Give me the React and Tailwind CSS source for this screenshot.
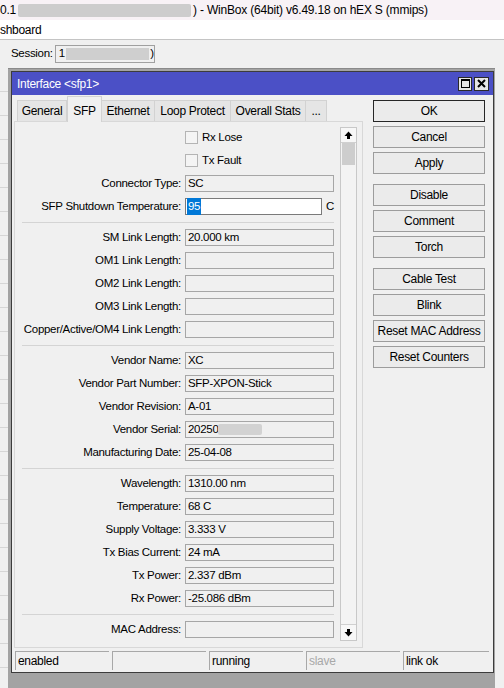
import React from 'react';

// WinBox "Interface <sfp1>" window, SFP tab

const sections = [
  [
    { type: 'check', label: 'Rx Lose' },
    { type: 'check', label: 'Tx Fault' },
    { label: 'Connector Type:', value: 'SC' },
    { type: 'edit', label: 'SFP Shutdown Temperature:', value: '95' },
  ],
  [
    { label: 'SM Link Length:', value: '20.000 km' },
    { label: 'OM1 Link Length:', value: '' },
    { label: 'OM2 Link Length:', value: '' },
    { label: 'OM3 Link Length:', value: '' },
    { label: 'Copper/Active/OM4 Link Length:', value: '' },
  ],
  [
    { label: 'Vendor Name:', value: 'XC' },
    { label: 'Vendor Part Number:', value: 'SFP-XPON-Stick' },
    { label: 'Vendor Revision:', value: 'A-01' },
    { label: 'Vendor Serial:', value: '20250', blur: true },
    { label: 'Manufacturing Date:', value: '25-04-08' },
  ],
  [
    { label: 'Wavelength:', value: '1310.00 nm' },
    { label: 'Temperature:', value: '68 C' },
    { label: 'Supply Voltage:', value: '3.333 V' },
    { label: 'Tx Bias Current:', value: '24 mA' },
    { label: 'Tx Power:', value: '2.337 dBm' },
    { label: 'Rx Power:', value: '-25.086 dBm' },
  ],
  [{ label: 'MAC Address:', value: '' }],
];

const buttonGroups = [
  ['OK', 'Cancel', 'Apply'],
  ['Disable', 'Comment', 'Torch'],
  ['Cable Test', 'Blink', 'Reset MAC Address', 'Reset Counters'],
];

const tabs = ['General', 'SFP', 'Ethernet', 'Loop Protect', 'Overall Stats', '...'];
const tabWidths = ['w-[50px]', 'w-[35px]', 'w-[53px]', 'w-[76px]', 'w-[75px]', 'w-[21px]'];

const status = [
  { text: 'enabled' },
  { text: '' },
  { text: 'running' },
  { text: 'slave', dim: true },
  { text: 'link ok' },
];

function Arrow({ down }) {
  return (
    <svg width="9" height="9" viewBox="0 0 9 9" className={down ? 'rotate-180' : ''}>
      <polygon points="4.5,0.5 8.5,5 0.5,5" fill="#000" />
      <rect x="3" y="5" width="3" height="3" fill="#000" />
    </svg>
  );
}

function Row({ item }) {
  if (item.type === 'check') {
    return (
      <div className="flex h-[23px] items-center">
        <div className="ml-[170px] h-[13px] w-[13px] border border-[#b4b4b4] bg-[#f4f4f4]" />
        <span className="ml-[4px]">{item.label}</span>
      </div>
    );
  }
  if (item.type === 'edit') {
    return (
      <div className="flex h-[23px] items-center">
        <div className="w-[166px] whitespace-nowrap text-right">{item.label}</div>
        <div className="ml-[4px] flex h-[17px] w-[137px] items-center border border-[#7a7a7a] bg-white pl-[1px]">
          <span className="bg-[#0078d7] px-[1px] text-white">{item.value}</span>
        </div>
        <span className="ml-[4px]">C</span>
      </div>
    );
  }
  return (
    <div className="flex h-[23px] items-center">
      <div className="w-[166px] whitespace-nowrap text-right">{item.label}</div>
      <div className="ml-[4px] flex h-[17px] w-[149px] items-center border border-[#a6a6a6] bg-[#f0f0f0] pl-[2px] whitespace-nowrap">
        {item.value}
        {item.blur && <span className="h-[11px] w-[44px] rounded-[2px] bg-[#d2d2d2]" />}
      </div>
    </div>
  );
}

export default function App() {
  return (
    <div className="flex h-[688px] w-[504px] flex-col overflow-hidden bg-[#f0f0f0] font-['Liberation_Sans',Arial,sans-serif] text-[11.5px] tracking-[-0.3px] text-black">
      {/* app title */}
      <div className="flex h-[20px] shrink-0 items-center whitespace-nowrap bg-[#f8f2f6] text-[12px] tracking-[-0.2px]">
        <span>0.1</span>
        <span className="ml-[2px] h-[13px] w-[173px] rounded-[2px] bg-[#cdcdcd]" />
        <span className="ml-[2px]">) - WinBox (64bit) v6.49.18 on hEX S (mmips)</span>
      </div>

      {/* menu */}
      <div className="flex h-[20px] shrink-0 items-center border-b border-[#c4c4c4] bg-white text-[12px]">
        <span>shboard</span>
      </div>

      {/* session */}
      <div className="flex h-[28px] shrink-0 items-center pl-[11px]">
        <span>Session:</span>
        <div className="ml-[2px] flex h-[18px] w-[100px] items-center border border-[#a0a0a0] bg-[#f0f0f0] pl-[3px]">
          <span>1</span>
          <span className="ml-[1px] h-[12px] w-[86px] bg-[#cfcfcf]" />
          <span className="ml-[1px]">)</span>
        </div>
      </div>

      <div className="flex flex-1">
        {/* side list */}
        <div className="flex w-[8px] flex-col">
          {Array.from({ length: 26 }).map((_, i) => (
            <div key={i} className="h-[24px] shrink-0 border-b border-[#d6d6d6]" />
          ))}
        </div>

        {/* MDI area */}
        <div className="w-[487px] border-t border-[#8a8a8a] bg-[#a3a3a3] pl-[3px] pt-[2px]">
          <div className="flex h-[602px] w-[483px] flex-col border border-[#3c3c3c] bg-[#f0f0f0]">
            {/* title bar */}
            <div className="flex h-[23px] shrink-0 items-center bg-[#4b50c6] pl-[5px] pr-[4px] text-[12px] text-white">
              <span className="flex-1">Interface &lt;sfp1&gt;</span>
              <div className="flex h-[14px] w-[14px] items-center justify-center border border-[#2a2a2a] bg-[#e6e6e6]">
                <div className="h-[9px] w-[9px] border-[1.5px] border-t-2 border-black" />
              </div>
              <div className="ml-[2px] flex h-[14px] w-[15px] items-center justify-center border border-[#2a2a2a] bg-[#e6e6e6]">
                <svg width="9" height="9" viewBox="0 0 9 9">
                  <path d="M1 1 L8 8 M8 1 L1 8" stroke="#000" strokeWidth="2" />
                </svg>
              </div>
            </div>

            <div className="flex flex-1">
              {/* tabs + panel */}
              <div className="ml-[2px] flex w-[349px] flex-col">
                <div className="flex h-[26px] items-end pl-[3px]">
                  {tabs.map((t, i) =>
                    i === 1 ? (
                      <div
                        key={t}
                        className={`${tabWidths[i]} relative z-10 -mb-px flex h-[26px] items-start justify-center border border-b-0 border-[#d2d2d2] bg-[#f0f0f0] pt-[5px] text-[12px]`}
                      >
                        {t}
                      </div>
                    ) : (
                      <div
                        key={t}
                        className={`${tabWidths[i]} flex h-[21px] items-center justify-center border border-b-0 border-l-0 border-[#d2d2d2] bg-[#e5e5e5] text-[12px] first:border-l`}
                      >
                        {t}
                      </div>
                    )
                  )}
                </div>
                <div className="flex h-[527px] border border-[#d8d8d8] bg-[#f0f0f0]">
                  <div className="flex w-[325px] flex-col pt-[4px]">
                    {sections.map((sec, si) => (
                      <React.Fragment key={si}>
                        {si > 0 && (
                          <div className="flex h-[8px] items-center">
                            <div className="ml-[7px] h-px w-[312px] bg-[#d4d4d4]" />
                          </div>
                        )}
                        {sec.map((item) => (
                          <Row key={item.label} item={item} />
                        ))}
                      </React.Fragment>
                    ))}
                  </div>
                  {/* scrollbar */}
                  <div className="mt-[5px] flex h-[514px] w-[17px] flex-col border border-[#c8c8c8] bg-[#f3f3f3]">
                    <div className="flex h-[15px] items-center justify-center border-b border-[#d0d0d0] bg-[#f7f7f7]">
                      <Arrow />
                    </div>
                    <div className="mx-[1px] h-[22px] bg-[#cdcdcd]" />
                    <div className="flex-1" />
                    <div className="flex h-[16px] items-center justify-center border-t border-[#d0d0d0] bg-[#f7f7f7]">
                      <Arrow down />
                    </div>
                  </div>
                </div>
              </div>

              {/* buttons */}
              <div className="ml-[10px] flex w-[112px] flex-col gap-[10px] pt-[5px]">
                {buttonGroups.map((g, gi) => (
                  <div key={gi} className="flex flex-col gap-[4px]">
                    {g.map((b) => (
                      <div
                        key={b}
                        className={`flex h-[22px] items-center justify-center bg-[#ebebeb] text-[12px] ${
                          b === 'OK' ? 'border border-[#262626]' : 'border border-[#9c9c9c]'
                        }`}
                      >
                        {b}
                      </div>
                    ))}
                  </div>
                ))}
              </div>
            </div>

            {/* status bar */}
            <div className="mb-[2px] mt-[3px] flex h-[19px] shrink-0 gap-[3px] pl-[3px] pr-[4px] text-[12px]">
              {status.map((s, i) => (
                <div
                  key={i}
                  className={`flex items-center border-l border-t border-[#a8a8a8] pl-[2px] ${
                    i === 4 ? 'flex-1' : 'w-[94px]'
                  } ${s.dim ? 'text-[#a8a8a8]' : ''}`}
                >
                  {s.text}
                </div>
              ))}
            </div>
          </div>
        </div>
      </div>
    </div>
  );
}
